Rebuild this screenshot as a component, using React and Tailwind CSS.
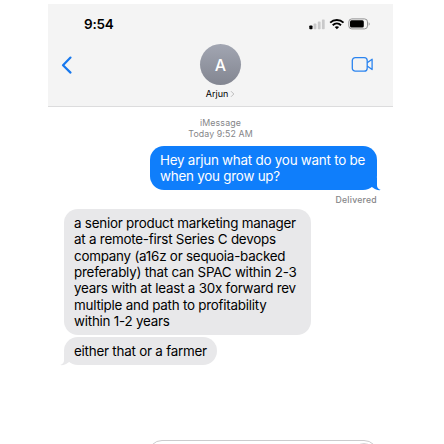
function StatusBar() {
  return (
    <div className="flex h-[40px] shrink-0 items-center justify-between pr-[22px] pl-[36px]">
      <span className="text-[13.5px] leading-[16px] font-semibold tracking-[-0.25px] text-black">9:54</span>
      <svg width="62" height="12" viewBox="0 0 62 12" className="mt-[-1px]">
        <rect x="0.3" y="7.5" width="3.2" height="3.8" rx="0.8" fill="#000" />
        <rect x="4.6" y="5.5" width="2.8" height="5.8" rx="0.7" fill="#c9c9ca" />
        <rect x="8.8" y="3.4" width="2.8" height="7.9" rx="0.7" fill="#c9c9ca" />
        <rect x="12.9" y="1.4" width="2.8" height="9.9" rx="0.7" fill="#c9c9ca" />
        <g fill="none" stroke="#000" strokeWidth="1.9">
          <path d="M21.2 4.6c3.7-3.5 9.6-3.5 13.3 0" />
          <path d="M23.7 7.2c2.4-2.2 5.9-2.2 8.3 0" />
        </g>
        <path d="M25.7 8.9c1.3-1 3.1-1 4.4 0l-2.2 2.3z" fill="#000" />
        <rect x="39.8" y="0.9" width="18.7" height="10" rx="3" fill="none" stroke="#929293" />
        <rect x="41" y="2.2" width="13.8" height="7.4" rx="1.5" fill="#000" />
        <path d="M59.7 4.2c1.3.5 1.3 3 0 3.5z" fill="#929293" />
      </svg>
    </div>
  );
}

function ContactBar() {
  return (
    <div className="flex justify-between pr-[19px] pl-[13px]">
      <svg width="12" height="20" viewBox="0 0 12 20" className="mt-[11px]">
        <path d="M9.5 2.6 2 10.2l7.5 7.4" fill="none" stroke="#1778ee" strokeWidth="2.2" strokeLinecap="round" strokeLinejoin="round" />
      </svg>
      <div className="ml-[17px] flex flex-col items-center">
        <div className="flex size-[41px] items-center justify-center rounded-full bg-linear-to-b from-[#a2a6b2] to-[#838691] pt-[1px] text-[16px] font-medium text-white">A</div>
        <div className="mt-[3px] flex items-center gap-[2px] text-[9px] leading-[12px] text-black">
          <span>Arjun</span>
          <svg width="5" height="8" viewBox="0 0 5 8">
            <path d="m1 1.2 2.8 2.8L1 6.8" fill="none" stroke="#b5b5b7" strokeWidth="0.9" />
          </svg>
        </div>
      </div>
      <svg width="23" height="18" viewBox="0 0 23 18" className="mt-[11px]">
        <g fill="none" stroke="#2b84ef" strokeWidth="1.3" strokeLinejoin="round">
          <rect x="1.3" y="2.6" width="14.9" height="13.6" rx="3" />
          <path d="m16.2 7.8 4.9-3.6v10.4l-4.9-3.6" />
        </g>
      </svg>
    </div>
  );
}

function Bubble({ lines, className }) {
  return (
    <div className={"relative text-[13.4px] leading-[16.35px] tracking-[-0.23px] whitespace-nowrap " + className}>
      {lines.map((line) => (
        <p key={line}>{line}</p>
      ))}
    </div>
  );
}

const reply = [
  "a senior product marketing manager",
  "at a remote-first Series C devops",
  "company (a16z or sequoia-backed",
  "preferably) that can SPAC within 2-3",
  "years with at least a 30x forward rev",
  "multiple and path to profitability",
  "within 1-2 years",
];

export default function App() {
  return (
    <div className="h-[444px] w-[444px] overflow-hidden bg-white pt-[4px] pl-[48px] font-['Inter',sans-serif]">
      <main className="flex h-[440px] w-[345px] flex-col">
        <header className="h-[103px] shrink-0 border-b border-[#dcdcdd] bg-[#f4f4f4]">
          <StatusBar />
          <ContactBar />
        </header>
        <div className="mt-[10px] text-center text-[8.8px] leading-[11px] text-[#858588]">
          <p className="tracking-[0.15px]">iMessage</p>
          <p className="tracking-[0.1px]">Today 9:52 AM</p>
        </div>
        <div className="relative mt-[7px] mr-[16px] self-end">
          <svg width="16" height="14" viewBox="0 0 16 14" className="absolute right-[-4px] bottom-[-1px]">
            <path d="M12 0v8.5c0 2 1.4 3.5 3.8 4.6-3 .3-5.4-.4-8-2.6L2 8z" fill="#0f7efb" />
          </svg>
          <Bubble className="h-[44px] w-[227px] rounded-[14px] bg-[#0f7efb] pt-[6px] pl-[10px] text-white" lines={["Hey arjun what do you want to be", "when you grow up?"]} />
        </div>
        <p className="mt-[4px] mr-[16px] self-end text-[8.7px] leading-[12px] font-medium tracking-[0.25px] text-[#858588]">Delivered</p>
        <Bubble className="mt-[3px] ml-[16px] h-[126px] w-[247px] rounded-[14px] bg-[#e8e8ea] pt-[6px] pl-[10px] text-black" lines={reply} />
        <div className="relative mt-[1.5px] ml-[16px] self-start">
          <svg width="16" height="14" viewBox="0 0 16 14" className="absolute bottom-[-1px] left-[-4px]">
            <path d="M4 0v8.5c0 2-1.4 3.5-3.8 4.6 3 .3 5.4-.4 8-2.6L14 8z" fill="#e8e8ea" />
          </svg>
          <Bubble className="h-[28.5px] w-[153px] rounded-[14px] bg-[#e8e8ea] pt-[6.4px] pl-[10px] text-black" lines={["either that or a farmer"]} />
        </div>
        <div className="mt-auto ml-[100px] h-[4px] w-[230px] shrink-0 overflow-hidden">
          <div className="flex h-[28px] justify-end rounded-[14px] border border-[#cbcbcd] pt-[2px] pr-[2px]">
            <div className="size-[22px] rounded-full border border-[#d5d5d7]" />
          </div>
        </div>
      </main>
    </div>
  );
}
